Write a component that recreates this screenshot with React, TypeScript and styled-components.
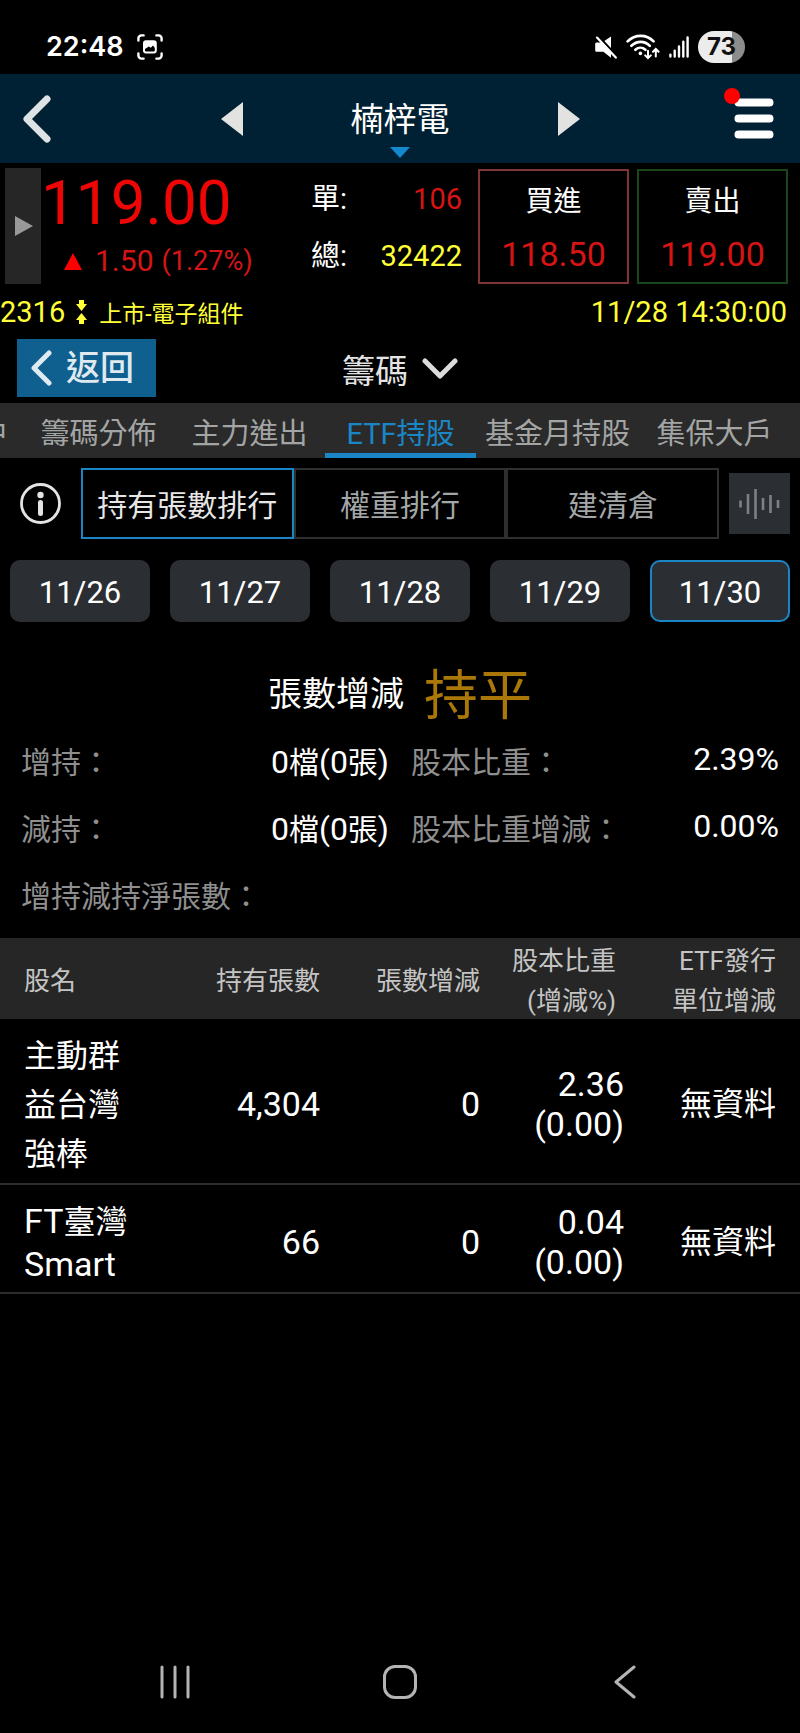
import React, { useState } from "react";
import styled, { createGlobalStyle } from "styled-components";

const sans = `Roboto, "Noto Sans CJK TC", sans-serif`;

const c = {
  navy: "#002033",
  panel: "#2a2a2a",
  head: "#262626",
  chip: "#2b2e33",
  blue: "#1b86c6",
  red: "#d61414",
  yellow: "#ffff37",
  muted: "#8f8f8f",
};

const GlobalStyle = createGlobalStyle`
  * { box-sizing: border-box; }
  body { margin: 0; background: #000; color: #fff; font-family: ${sans}; }
  button { font-family: inherit; color: inherit; background: none; border: 0; padding: 0; margin: 0; cursor: pointer; }
  svg { display: block; flex: none; }
`;

const Page = styled.div`
  display: flex;
  flex-direction: column;
  min-height: 100vh;
  overflow-x: hidden;
`;

/* ---------- status bar ---------- */
const StatusBar = styled.div`
  display: flex;
  align-items: center;
  justify-content: space-between;
  height: 74px;
  padding: 20px 55px 0 46px;
`;
const StatusGroup = styled.div<{ $gap: number }>`
  display: flex;
  align-items: center;
  gap: ${(p) => p.$gap}px;
`;
const Clock = styled.span`
  font: 600 27px/32px Inter, sans-serif;
`;
const Battery = styled.span`
  display: flex;
  align-items: center;
  justify-content: center;
  width: 47px;
  height: 32px;
  border-radius: 16px;
  background: linear-gradient(to right, #ececec 73%, #8c8c8c 73%);
  color: #111;
  font: 700 24px/32px Inter, sans-serif;
`;

/* ---------- header ---------- */
const Header = styled.header`
  display: grid;
  grid-template-columns: 1fr auto 1fr;
  height: 89px;
  padding: 0 20px;
  background: ${c.navy};
`;
const HeaderSide = styled.div<{ $end?: boolean }>`
  display: flex;
  align-items: center;
  justify-content: ${(p) => (p.$end ? "flex-end" : "flex-start")};
`;
const Switcher = styled.div`
  display: flex;
  align-items: center;
  gap: 108px;
`;
const StockTitle = styled.button`
  display: flex;
  flex-direction: column;
  align-items: center;
  gap: 3px;
  height: 100%;
  padding-top: 22px;
  font-size: 33px;
  line-height: 48px;
`;
const MenuButton = styled.button`
  position: relative;
  padding: 4px 6px;
`;
const Dot = styled.span`
  position: absolute;
  top: -6px;
  left: -4px;
  width: 16px;
  height: 16px;
  border-radius: 50%;
  background: #f00;
`;

/* ---------- quote ---------- */
const Quote = styled.section`
  display: flex;
  padding: 5px 12px 0 5px;
`;
const Handle = styled.button`
  display: flex;
  align-items: center;
  justify-content: center;
  flex: none;
  width: 36px;
  height: 116px;
  padding-left: 2px;
  background: ${c.head};
`;
const PriceBlock = styled.div`
  flex: 1;
  color: #ee0505;
`;
const Price = styled.div`
  font-size: 62px;
  line-height: 70px;
`;
const Change = styled.div`
  display: flex;
  align-items: center;
  padding-left: 23px;
  font-size: 30px;
  line-height: 46px;
  color: ${c.red};
`;
const ChangeValue = styled.span`
  padding: 0 8px 0 13px;
`;
const ChangePercent = styled.span`
  font-size: 27px;
`;
const Totals = styled.dl`
  flex: none;
  width: 151px;
  margin: 0 16px 0 0;
  padding-top: 3px;
`;
const TotalRow = styled.div<{ $color: string }>`
  display: flex;
  justify-content: space-between;
  font-size: 29px;
  line-height: 57px;
  dt { margin: 0; }
  dd { margin: 0; color: ${(p) => p.$color}; }
`;
const Orders = styled.div`
  display: flex;
  gap: 8px;
`;
const OrderButton = styled.button<{ $line: string }>`
  width: 151px;
  height: 115px;
  margin-top: 1px;
  padding-top: 2px;
  border: 2px solid ${(p) => p.$line};
  font-size: 28px;
  line-height: 54px;
`;
const OrderPrice = styled.span`
  display: block;
  font-size: 34px;
  line-height: 51px;
  color: ${c.red};
`;

const InfoLine = styled.div`
  display: flex;
  align-items: center;
  height: 54px;
  padding-right: 13px;
  font-size: 29px;
  color: ${c.yellow};
`;
const Market = styled.span`
  flex: 1;
  padding-left: 12px;
  font-size: 23px;
`;
const CodeIcon = styled.span`
  padding-left: 11px;
`;

/* ---------- section bar ---------- */
const SectionBar = styled.div`
  display: grid;
  grid-template-columns: 1fr auto 1fr;
  align-items: start;
  height: 64px;
  padding: 0 17px;
`;
const ReturnButton = styled.button`
  display: flex;
  align-items: center;
  gap: 14px;
  width: 139px;
  height: 58px;
  padding-left: 13px;
  background: #0f5f8f;
  color: #dfe9f0;
  font-size: 34px;
  font-weight: 500;
  line-height: 58px;
`;
const SectionPicker = styled.button`
  display: flex;
  align-items: center;
  gap: 14px;
  height: 60px;
  color: #e4e4e4;
  font-size: 33px;
`;

/* ---------- tabs ---------- */
const Tabs = styled.nav`
  display: flex;
  height: 55px;
  overflow: hidden;
  background: ${c.panel};
`;
const Tab = styled.button<{ $active?: boolean }>`
  flex: none;
  min-width: 151px;
  padding: 12px 9px 0;
  border-bottom: 5px solid ${(p) => (p.$active ? c.blue : "transparent")};
  color: ${(p) => (p.$active ? c.blue : "#a3a5a5")};
  font-size: 29px;
  line-height: 38px;
  white-space: nowrap;
`;
const CutTab = styled(Tab)`
  display: flex;
  justify-content: flex-end;
  width: 23px;
  min-width: 0;
  padding: 12px 16px 0 0;
  overflow: hidden;
`;

/* ---------- filters ---------- */
const Filters = styled.div`
  display: flex;
  align-items: center;
  padding: 10px 10px 0 20px;
`;
const Segments = styled.div`
  display: grid;
  grid-template-columns: repeat(3, 1fr);
  flex: 1;
  margin: 0 10px 0 20px;
`;
const Segment = styled.button<{ $active: boolean }>`
  height: 71px;
  padding-bottom: 2px;
  border: 2px solid ${(p) => (p.$active ? c.blue : "#2d2f30")};
  color: ${(p) => (p.$active ? "#e6e6e6" : "#a3a7a8")};
  font-size: 30px;
  white-space: nowrap;
`;
const WaveButton = styled.button`
  display: flex;
  align-items: center;
  justify-content: center;
  width: 61px;
  height: 61px;
  background: ${c.chip};
`;
const Dates = styled.div`
  display: grid;
  grid-template-columns: repeat(5, 1fr);
  gap: 20px;
  padding: 21px 10px 0;
`;
const DateChip = styled.button<{ $active: boolean }>`
  height: 62px;
  padding-top: 4px;
  border: 2px solid ${(p) => (p.$active ? c.blue : c.chip)};
  border-radius: 10px;
  background: ${c.chip};
  font-size: 31px;
  line-height: 36px;
`;

/* ---------- summary ---------- */
const Verdict = styled.h2`
  display: flex;
  align-items: flex-start;
  justify-content: center;
  gap: 20px;
  height: 67px;
  margin: 40px 0 0;
  font-size: 34px;
  font-weight: 400;
  line-height: 64px;
`;
const VerdictValue = styled.strong`
  color: #a97808;
  font-size: 54px;
  font-weight: 400;
  line-height: 70px;
`;
const Summary = styled.dl`
  display: grid;
  grid-template-columns: 1fr 1fr;
  column-gap: 22px;
  margin: 0 0 8px;
  padding: 0 21px;
`;
const SummaryItem = styled.div`
  display: flex;
  justify-content: space-between;
  font-size: 30px;
  line-height: 67px;
  white-space: nowrap;
  dt { color: ${c.muted}; }
  dd { margin: 0; }
`;
const Figure = styled.span`
  font-size: 32px;
  line-height: 40px;
`;
const Ratio = styled.dd`
  font-size: 32px;
  line-height: 61px;
`;

/* ---------- table ---------- */
const Holdings = styled.table`
  width: 100%;
  border-collapse: collapse;
  table-layout: fixed;
`;
const Th = styled.th<{ $left?: boolean; $pad?: number }>`
  height: 81px;
  padding: 1px ${(p) => p.$pad ?? 0}px 0 ${(p) => (p.$left ? 24 : 0)}px;
  background: ${c.head};
  color: #c4c4c4;
  font-size: 26px;
  font-weight: 400;
  line-height: 40px;
  text-align: ${(p) => (p.$left ? "left" : "right")};
`;
const ThText = styled.span`
  display: block;
  padding-top: 2px;
  margin-bottom: -2px;
`;
const Row = styled.tr`
  border-bottom: 2px solid #2c2e2e;
`;
const Td = styled.td<{ $pad?: number; $text?: boolean }>`
  height: 109px;
  padding: 11px ${(p) => p.$pad ?? 0}px 5px 0;
  font-size: ${(p) => (p.$text ? 32 : 34)}px;
  line-height: 40px;
  text-align: right;
`;
const NameTd = styled(Td)`
  padding: 13px 0 4px 24px;
  text-align: left;
  vertical-align: top;
`;
const NameLine = styled.span<{ $latin?: boolean }>`
  display: block;
  font-size: ${(p) => (p.$latin ? 34 : 32)}px;
  line-height: ${(p) => (p.$latin ? 34 : 49)}px;
  white-space: nowrap;
`;
const Latin = styled.span`
  font-size: 34px;
  line-height: 40px;
`;

/* ---------- system navigation ---------- */
const SystemNav = styled.nav`
  display: grid;
  grid-template-columns: repeat(3, 1fr);
  height: 102px;
  margin-top: auto;
  padding: 0 63px;
`;
const SystemButton = styled.button`
  display: flex;
  align-items: center;
  justify-content: center;
`;

const Chevron = ({ w, h, d, sw, color }: { w: number; h: number; d: string; sw: number; color: string }) => (
  <svg width={w} height={h} viewBox={`0 0 ${w} ${h}`} fill="none" stroke={color} strokeWidth={sw} strokeLinecap="round" strokeLinejoin="round">
    <path d={d} />
  </svg>
);
const Triangle = ({ w, h, d, color }: { w: number; h: number; d: string; color: string }) => (
  <svg width={w} height={h} viewBox={`0 0 ${w} ${h}`} fill={color}>
    <path d={d} />
  </svg>
);
const CaptureIcon = () => (
  <svg width="26" height="26" viewBox="0 0 26 26" fill="none" stroke="#fff" strokeWidth="2.4" strokeLinecap="round">
    <path d="M1.4 6.5V4.4a3 3 0 0 1 3-3h2.2M19.4 1.4h2.2a3 3 0 0 1 3 3v2.1M24.6 19.4v2.2a3 3 0 0 1-3 3h-2.2M6.6 24.6H4.4a3 3 0 0 1-3-3v-2.2" />
    <rect x="7" y="7.2" width="11.8" height="11.2" rx="2" strokeWidth="2" />
    <path d="M8 8h10v6l-2-2.4-2.200 2.200-2-1.400L8 15z" fill="#fff" stroke="none" />
  </svg>
);
const MuteIcon = () => (
  <svg width="22" height="23" viewBox="0 0 22 23" fill="#fff">
    <path d="M1.600 6.600H7L16 .4v21.400L8.400 15.800H1.600A1.400 1.400 0 0 1 .2 14.400V8a1.400 1.400 0 0 1 1.400-1.400z" />
    <path d="M3.400 .4 22.200 20.400" stroke="#000" strokeWidth="2.400" />
    <path d="M2 1.600 20.800 21.600" stroke="#fff" strokeWidth="2.200" strokeLinecap="round" />
  </svg>
);
const WifiIcon = () => (
  <svg width="34" height="26" viewBox="0 0 34 26" fill="none" stroke="#fff" strokeWidth="2.600" strokeLinecap="round">
    <path d="M1.600 7.400c7.400-7.400 18.800-7.400 26 0M5.400 11.800c5.400-5.200 13.200-5.200 18.400 0M9.400 15.800c3-2.800 7-2.800 10 0" />
    <circle cx="14.400" cy="19.400" r="1.800" fill="#fff" stroke="none" />
    <path d="M22 16.800v7M19.200 21.400l2.800 2.800 2.800-2.800M29.800 22.400v-7M27 17.800l2.800-2.800 2.800 2.800" strokeWidth="2" />
  </svg>
);
const SignalIcon = () => (
  <svg width="20" height="22" viewBox="0 0 20 22" stroke="#fff" strokeWidth="2.400" strokeLinecap="round">
    <path d="M1.400 18.600v2M5.700 14.600v6M10 10.400v10.200M14.300 5.800v14.800M18.600 1.400v19.200" />
  </svg>
);
const MenuIcon = () => (
  <svg width="40" height="42" viewBox="0 0 40 42" stroke="#fff" strokeWidth="8" strokeLinecap="round">
    <path d="M4.500 4.500h31M4.500 20.500h31M4.500 36.500h31" />
  </svg>
);
const CodeArrows = () => (
  <svg width="11" height="26" viewBox="0 0 11 26" fill={c.yellow}>
    <path d="M3 1h5v4h3l-5.500 7L0 5h3zM3 25h5v-4h3l-5.500-7L0 21h3z" />
  </svg>
);
const InfoIcon = () => (
  <svg width="41" height="41" viewBox="0 0 41 41" fill="#e4e4e4">
    <circle cx="20.500" cy="20.500" r="19" fill="none" stroke="#e4e4e4" strokeWidth="2.800" />
    <circle cx="20.500" cy="12" r="3.200" />
    <rect x="18" y="17" width="5" height="16" rx="2.500" />
  </svg>
);
const WaveIcon = () => (
  <svg width="41" height="30" viewBox="0 0 41 30" stroke="#7c8185" strokeWidth="2.600">
    <path d="M1.500 11.500v7M9 5v20M16.500 0v30M24 9v12M31.500 6v18M39 11v8" />
  </svg>
);

const tabs = ["籌碼分佈", "主力進出", "ETF持股", "基金月持股", "集保大戶"];
const modes = ["持有張數排行", "權重排行", "建清倉"];
const dates = ["11/26", "11/27", "11/28", "11/29", "11/30"];

export default function App() {
  const [tab, setTab] = useState("ETF持股");
  const [mode, setMode] = useState("持有張數排行");
  const [date, setDate] = useState("11/30");

  return (
    <Page>
      <GlobalStyle />
      <StatusBar>
        <StatusGroup $gap={13}>
          <Clock>22:48</Clock>
          <CaptureIcon />
        </StatusGroup>
        <StatusGroup $gap={9}>
          <MuteIcon />
          <WifiIcon />
          <SignalIcon />
          <Battery>73</Battery>
        </StatusGroup>
      </StatusBar>

      <Header>
        <HeaderSide>
          <button aria-label="上一頁">
            <Chevron w={33} h={50} d="M27 5 7 25 27 45" sw={7} color="#dde2e5" />
          </button>
        </HeaderSide>
        <Switcher>
          <button aria-label="上一檔">
            <Triangle w={22} h={34} d="M22 0v34L0 17z" color="#e2e2e0" />
          </button>
          <StockTitle>
            楠梓電
            <Triangle w={20} h={11} d="M0 0h20L10 11z" color="#1488cc" />
          </StockTitle>
          <button aria-label="下一檔">
            <Triangle w={22} h={34} d="M0 0v34l22-17z" color="#e2e2e0" />
          </button>
        </Switcher>
        <HeaderSide $end>
          <MenuButton aria-label="選單">
            <Dot />
            <MenuIcon />
          </MenuButton>
        </HeaderSide>
      </Header>

      <Quote>
        <Handle aria-label="展開">
          <Triangle w={18} h={20} d="M0 0v20l18-10z" color="#999" />
        </Handle>
        <PriceBlock>
          <Price>119.00</Price>
          <Change>
            <Triangle w={18} h={17} d="M9 0 18 17H0z" color="#f00" />
            <ChangeValue>1.50</ChangeValue>
            <ChangePercent>(1.27%)</ChangePercent>
          </Change>
        </PriceBlock>
        <Totals>
          <TotalRow $color={c.red}>
            <dt>單:</dt>
            <dd>106</dd>
          </TotalRow>
          <TotalRow $color={c.yellow}>
            <dt>總:</dt>
            <dd>32422</dd>
          </TotalRow>
        </Totals>
        <Orders>
          <OrderButton $line="#7d3535">
            買進<OrderPrice>118.50</OrderPrice>
          </OrderButton>
          <OrderButton $line="#1b451b">
            賣出<OrderPrice>119.00</OrderPrice>
          </OrderButton>
        </Orders>
      </Quote>

      <InfoLine>
        <span>2316</span>
        <CodeIcon>
          <CodeArrows />
        </CodeIcon>
        <Market>上市-電子組件</Market>
        <time>11/28 14:30:00</time>
      </InfoLine>

      <SectionBar>
        <ReturnButton>
          <Chevron w={22} h={36} d="M19 3 4 18 19 33" sw={5} color="#dfe9f0" />
          返回
        </ReturnButton>
        <SectionPicker aria-haspopup="listbox">
          籌碼
          <Chevron w={36} h={22} d="M3 3 18 18 33 3" sw={5} color="#dcdcdc" />
        </SectionPicker>
      </SectionBar>

      <Tabs>
        <CutTab>中</CutTab>
        {tabs.map((t) => (
          <Tab key={t} $active={t === tab} onClick={() => setTab(t)}>
            {t}
          </Tab>
        ))}
      </Tabs>

      <Filters>
        <button aria-label="說明">
          <InfoIcon />
        </button>
        <Segments>
          {modes.map((m) => (
            <Segment key={m} $active={m === mode} onClick={() => setMode(m)}>
              {m}
            </Segment>
          ))}
        </Segments>
        <WaveButton aria-label="語音">
          <WaveIcon />
        </WaveButton>
      </Filters>

      <Dates>
        {dates.map((d) => (
          <DateChip key={d} $active={d === date} onClick={() => setDate(d)}>
            {d}
          </DateChip>
        ))}
      </Dates>

      <Verdict>
        張數增減<VerdictValue>持平</VerdictValue>
      </Verdict>

      <Summary>
        <SummaryItem>
          <dt>增持：</dt>
          <dd>
            <Figure>0</Figure>檔<Figure>(0</Figure>張<Figure>)</Figure>
          </dd>
        </SummaryItem>
        <SummaryItem>
          <dt>股本比重：</dt>
          <Ratio>2.39%</Ratio>
        </SummaryItem>
        <SummaryItem>
          <dt>減持：</dt>
          <dd>
            <Figure>0</Figure>檔<Figure>(0</Figure>張<Figure>)</Figure>
          </dd>
        </SummaryItem>
        <SummaryItem>
          <dt>股本比重增減：</dt>
          <Ratio>0.00%</Ratio>
        </SummaryItem>
        <SummaryItem>
          <dt>增持減持淨張數：</dt>
          <dd />
        </SummaryItem>
      </Summary>

      <Holdings>
        <thead>
          <tr>
            <Th $left>
              <ThText>股名</ThText>
            </Th>
            <Th>
              <ThText>持有張數</ThText>
            </Th>
            <Th>
              <ThText>張數增減</ThText>
            </Th>
            <Th $pad={24}>
              <ThText>
                股本比重
                <br />
                (增減%)
              </ThText>
            </Th>
            <Th $pad={24}>
              <ThText>
                ETF發行
                <br />
                單位增減
              </ThText>
            </Th>
          </tr>
        </thead>
        <tbody>
          <Row>
            <NameTd>
              <NameLine>主動群</NameLine>
              <NameLine>益台灣</NameLine>
              <NameLine>強棒</NameLine>
            </NameTd>
            <Td>4,304</Td>
            <Td>0</Td>
            <Td $pad={16}>
              2.36
              <br />
              (0.00)
            </Td>
            <Td $pad={24} $text>
              無資料
            </Td>
          </Row>
          <Row>
            <NameTd>
              <NameLine>
                <Latin>FT</Latin>臺灣
              </NameLine>
              <NameLine $latin>Smart</NameLine>
            </NameTd>
            <Td>66</Td>
            <Td>0</Td>
            <Td $pad={16}>
              0.04
              <br />
              (0.00)
            </Td>
            <Td $pad={24} $text>
              無資料
            </Td>
          </Row>
        </tbody>
      </Holdings>

      <SystemNav>
        <SystemButton aria-label="最近">
          <Chevron w={30} h={34} d="M2 2v30M15 2v30M28 2v30" sw={3} color="#b4b4b4" />
        </SystemButton>
        <SystemButton aria-label="主畫面">
          <svg width="34" height="34" viewBox="0 0 34 34" fill="none" stroke="#b4b4b4" strokeWidth="3">
            <rect x="1.500" y="1.500" width="31" height="31" rx="10.500" />
          </svg>
        </SystemButton>
        <SystemButton aria-label="返回">
          <Chevron w={24} h={34} d="M21 2 3 17 21 32" sw={3} color="#b4b4b4" />
        </SystemButton>
      </SystemNav>
    </Page>
  );
}
